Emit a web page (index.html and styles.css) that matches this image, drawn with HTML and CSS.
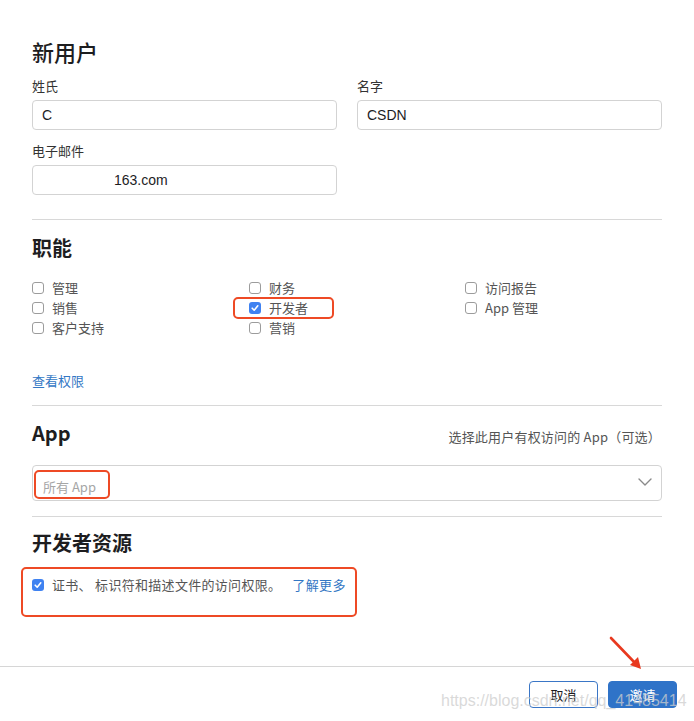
FILE: index.html
```html
<!DOCTYPE html>
<html lang="zh-CN">
<head>
<meta charset="utf-8">
<title>新用户</title>
<link rel="stylesheet" href="styles.css">
</head>
<body>
<div class="sheet">
  <div class="content">
    <h1 class="title">新用户</h1>
    <div class="fields">
      <div class="field">
        <div class="label">姓氏</div>
        <div class="input">C</div>
      </div>
      <div class="field">
        <div class="label">名字</div>
        <div class="input">CSDN</div>
      </div>
      <div class="field">
        <div class="label">电子邮件</div>
        <div class="input"><span class="masked"></span>163.com</div>
      </div>
    </div>

    <hr class="divider divider-1">

    <h2 class="heading">职能</h2>
    <div class="roles">
      <label class="check"><span class="box"></span>管理</label>
      <label class="check"><span class="box"></span>销售</label>
      <label class="check"><span class="box"></span>客户支持</label>
      <label class="check"><span class="box"></span>财务</label>
      <label class="check marked"><span class="box on"><svg viewBox="0 0 12 12" width="12" height="12"><path d="M3.2 6.2 L5.2 8.2 L8.8 3.8" fill="none" stroke="#fff" stroke-width="1.6" stroke-linecap="round" stroke-linejoin="round"/></svg></span>开发者<span class="annot annot-role"></span></label>
      <label class="check"><span class="box"></span>营销</label>
      <label class="check"><span class="box"></span>访问报告</label>
      <label class="check"><span class="box"></span>App 管理</label>
    </div>
    <a class="link view-link">查看权限</a>

    <hr class="divider divider-2">

    <div class="app-head">
      <h2 class="heading">App</h2>
      <span class="hint">选择此用户有权访问的 App（可选）</span>
    </div>
    <div class="select">
      <span class="placeholder">所有 App</span>
      <svg class="chevron" viewBox="0 0 14 8" width="14" height="8"><path d="M1 1 L7 7 L13 1" fill="none" stroke="#8a8a8a" stroke-width="1.4" stroke-linecap="round" stroke-linejoin="round"/></svg>
      <span class="annot annot-select"></span>
    </div>

    <hr class="divider divider-3">

    <h2 class="heading dev-heading">开发者资源</h2>
    <div class="annot-row">
      <label class="check dev-check"><span class="box on"><svg viewBox="0 0 12 12" width="12" height="12"><path d="M3.2 6.2 L5.2 8.2 L8.8 3.8" fill="none" stroke="#fff" stroke-width="1.6" stroke-linecap="round" stroke-linejoin="round"/></svg></span>证书、 标识符和描述文件的访问权限。<a class="link more-link">了解更多</a></label>
    </div>
  </div>

  <div class="footer">
    <button class="btn btn-cancel">取消</button>
    <button class="btn btn-invite">邀请</button>
  </div>

  <svg class="arrow" viewBox="0 0 40 40" width="40" height="40"><path d="M3 3 L28 29" stroke="#e8391f" stroke-width="2.6" stroke-linecap="round"/><path d="M33 34 L22 30 L30 22 Z" fill="#e8391f"/></svg>
  <div class="watermark">https://blog.csdn.net/qq_41485414</div>
</div>
</body>
</html>
```
FILE: styles.css
```css
* { box-sizing: border-box; }
html, body {
  margin: 0;
  padding: 0;
  background: #fff;
}
body {
  font-family: "Liberation Sans", "Noto Sans CJK SC", sans-serif;
  color: #222;
  width: 694px;
  height: 721px;
  overflow: hidden;
}
.sheet {
  position: relative;
  width: 694px;
  height: 721px;
}
.content {
  padding: 37px 32px 0;
}
.title {
  margin: 0;
  font-size: 22px;
  line-height: 28px;
  font-weight: 500;
  color: #1d1d1f;
  font-family: "Noto Sans CJK SC", sans-serif;
}
.fields {
  display: grid;
  grid-template-columns: 305px 305px;
  column-gap: 20px;
  row-gap: 12px;
  margin-top: 12px;
}
.label {
  font-size: 13px;
  line-height: 18px;
  color: #333;
  margin-bottom: 5px;
  font-family: "Noto Sans CJK SC", sans-serif;
}
.input {
  height: 30px;
  border: 1px solid #d3d3d3;
  border-radius: 4px;
  padding: 0 9px;
  font-size: 14px;
  line-height: 28px;
  color: #1d1d1f;
}
.masked {
  display: inline-block;
  width: 72px;
}
.divider {
  border: 0;
  border-top: 1px solid #d8d8d8;
  margin: 0;
  height: 0;
}
.divider-1 { margin-top: 24px; }
.heading {
  margin: 0;
  font-size: 20px;
  line-height: 26px;
  font-weight: 700;
  color: #1d1d1f;
  font-family: "Noto Sans CJK SC", sans-serif;
}
.divider-1 + .heading { margin-top: 15px; }
.roles {
  display: grid;
  grid-template-columns: 217px 216px 1fr;
  grid-template-rows: repeat(3, 20px);
  grid-auto-flow: column;
  margin-top: 17px;
}
.check {
  position: relative;
  display: flex;
  align-items: center;
  font-size: 13px;
  line-height: 20px;
  color: #555;
  font-family: "Noto Sans CJK SC", sans-serif;
}
.box {
  flex: none;
  width: 12px;
  height: 12px;
  border: 1px solid #9c9c9c;
  border-radius: 3px;
  margin-right: 8px;
  background: #fff;
  display: flex;
}
.box.on {
  border: 0;
  background: #3f82f1;
}
.annot {
  position: absolute;
  border: 2px solid #ee4a25;
  border-radius: 5px;
  pointer-events: none;
}
.annot-role {
  left: -16px;
  top: -1px;
  width: 101px;
  height: 22px;
}
.link {
  color: #3377c4;
  font-size: 13px;
  line-height: 18px;
  font-family: "Noto Sans CJK SC", sans-serif;
  cursor: pointer;
}
.view-link {
  display: block;
  margin-top: 34px;
}
.divider-2 { margin-top: 15px; }
.app-head {
  display: flex;
  justify-content: space-between;
  align-items: flex-end;
  margin-top: 14px;
  padding-right: 1px;
}
.hint {
  font-size: 13px;
  line-height: 18px;
  color: #555;
  font-family: "Noto Sans CJK SC", sans-serif;
  letter-spacing: 0.2px;
}
.select {
  position: relative;
  display: flex;
  align-items: center;
  justify-content: space-between;
  height: 36px;
  margin-top: 19px;
  border: 1px solid #d3d3d3;
  border-radius: 4px;
  padding: 0 9px 0 10px;
}
.placeholder {
  font-size: 13px;
  color: #a6a6a6;
  font-family: "Noto Sans CJK SC", sans-serif;
  padding-top: 7px;
}
.chevron {
  margin-top: -3px;
}
.annot-select {
  left: 1px;
  top: 4px;
  width: 76px;
  height: 29px;
}
.divider-3 { margin-top: 15px; }
.dev-heading { margin-top: 13px; }
.annot-row {
  margin: 11px 0 0 -11px;
  width: 336px;
  height: 50px;
  border: 2px solid #ee4a25;
  border-radius: 5px;
  padding: 6px 0 0 9px;
}
.dev-check {
  letter-spacing: 0.3px;
}
.more-link {
  margin-left: 11px;
  line-height: 20px;
  letter-spacing: 0.4px;
}
.footer {
  position: absolute;
  left: 0;
  right: 0;
  top: 666px;
  border-top: 1px solid #d6d6d6;
  display: flex;
  justify-content: flex-end;
  gap: 10px;
  padding: 14px 17px 0 0;
}
.btn {
  width: 69px;
  height: 27px;
  border-radius: 4px;
  font-size: 13px;
  font-family: "Noto Sans CJK SC", sans-serif;
  padding: 0;
  line-height: 25px;
}
.btn-cancel {
  background: #fff;
  border: 1px solid #3a76c6;
  color: #1d1d1f;
}
.btn-invite {
  background: #2f73c8;
  border: 1px solid #2f73c8;
  color: #fff;
}
.arrow {
  position: absolute;
  left: 608px;
  top: 635px;
}
.watermark {
  position: absolute;
  left: 441px;
  top: 691px;
  font-family: "Liberation Sans", sans-serif;
  font-size: 16px;
  line-height: 20px;
  color: rgba(205, 205, 205, 0.75);
  white-space: nowrap;
  pointer-events: none;
}
```
